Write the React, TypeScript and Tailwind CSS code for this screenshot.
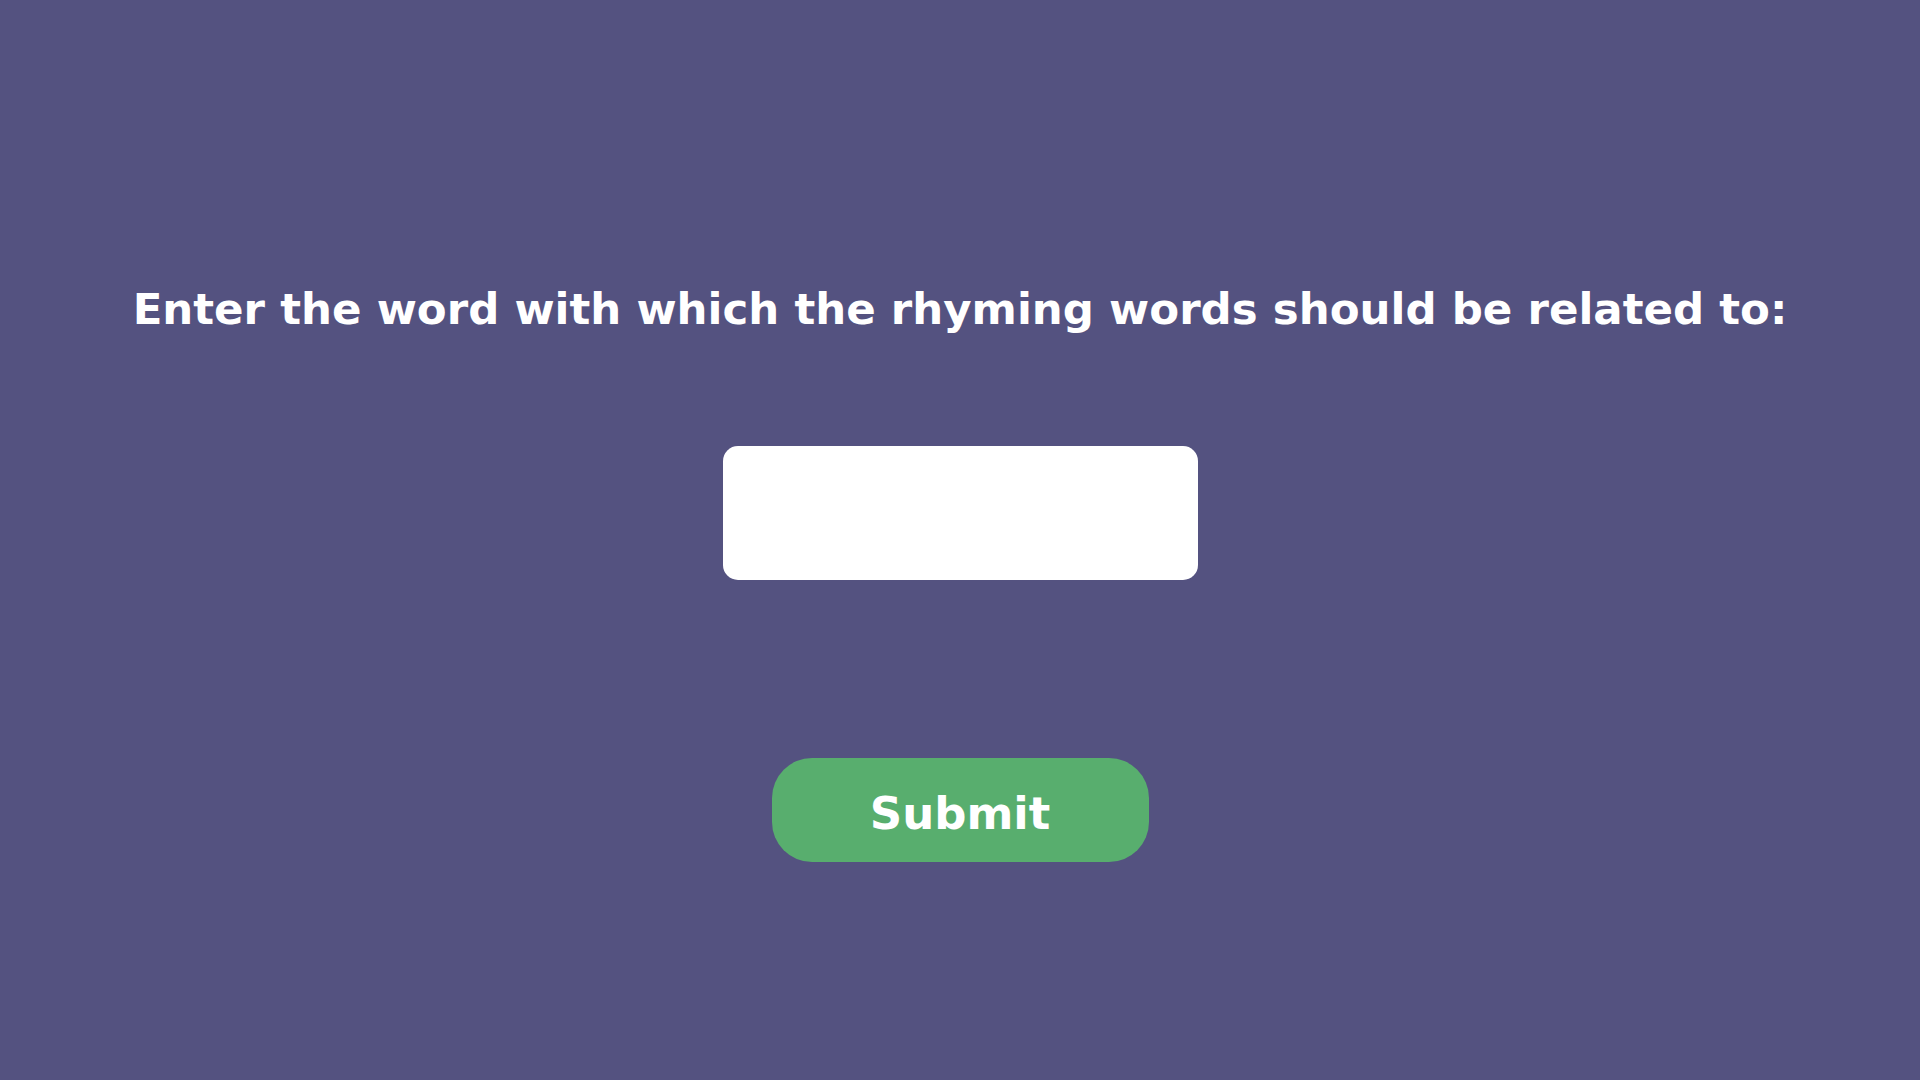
export default function App() {
  return (
    <div
      className="w-[1920px] h-[1080px] bg-[#545280] flex flex-col items-center"
      style={{ fontFamily: '"DejaVu Sans", "Liberation Sans", sans-serif' }}
    >
      <h1 className="mt-[278px] h-[62px] leading-[62px] text-[43.5px] font-bold text-white whitespace-nowrap">
        Enter the word with which the rhyming words should be related to:
      </h1>
      <input
        type="text"
        className="mt-[106px] w-[475px] h-[134px] rounded-[15px] bg-white outline-none border-0"
      />
      <button className="mt-[178px] w-[377px] h-[104px] pt-[6px] rounded-[40px] bg-[#58ae6e] text-white text-[45px] font-bold leading-none">
        Submit
      </button>
    </div>
  );
}
